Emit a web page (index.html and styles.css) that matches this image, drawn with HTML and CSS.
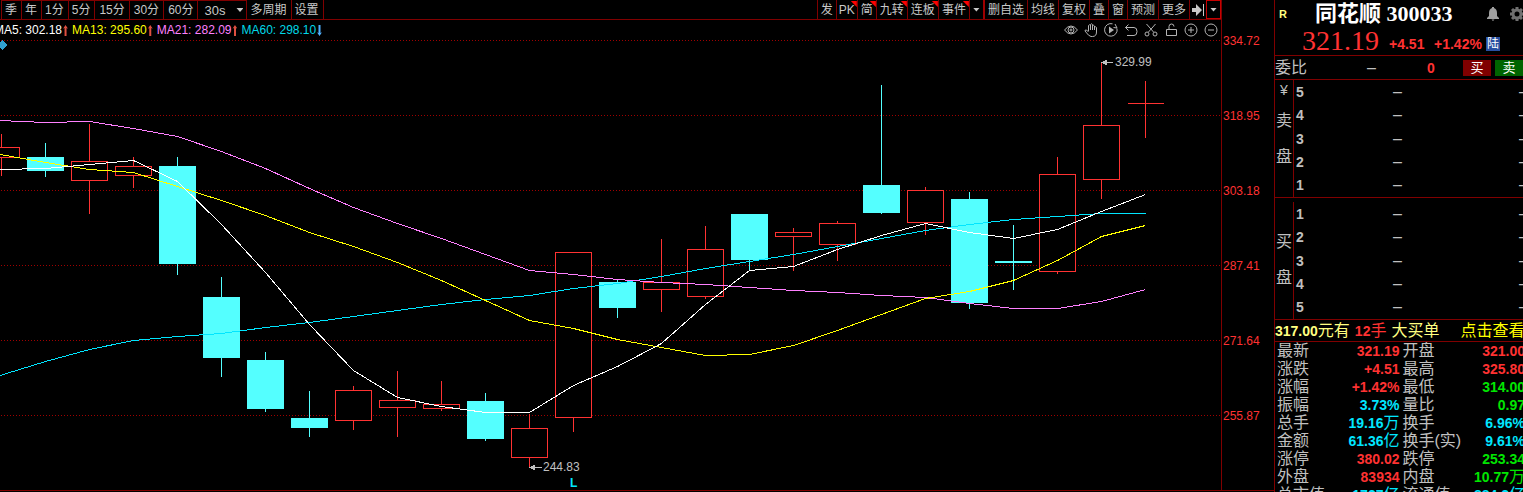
FILE: index.html
```
<!DOCTYPE html>
<html lang="zh-CN">
<head>
    <meta charset="UTF-8">
    <meta name="viewport" content="width=device-width, initial-scale=1.0">
    <title>同花顺 300033</title>
    <link rel="stylesheet" href="styles.css">
</head>
<body>

<div class="app">
    <main class="chart-area">
        <div class="chart-head">
            <div class="toolbar">
                <div class="periods">
                    <button>季</button>
                    <button>年</button>
                    <button>1分</button>
                    <button>5分</button>
                    <button class="wide">15分</button>
                    <button class="wide">30分</button>
                    <button class="wide">60分</button>
                    <span class="drop">
                        <select aria-label="秒周期"><option>30s</option></select>
                    </span>
                    <button class="plain">多周期</button>
                    <button class="plain last">设置</button>
                </div>
                <div class="tools">
                    <button>发</button>
                    <button class="mark pk">PK</button>
                    <button class="mark">简</button>
                    <button class="mark">九转</button>
                    <button class="mark">连板</button>
                    <button class="mark">事件</button>
                    <button class="caret" aria-label="展开"></button>
                    <button class="split">删自选</button>
                    <button>均线</button>
                    <button>复权</button>
                    <button>叠</button>
                    <button>窗</button>
                    <button>预测</button>
                    <button>更多</button>
                    <button class="skip" aria-label="最右">
                        <svg width="12" height="12" viewBox="0 0 12 12"><path d="M0 4h4V0l6 6-6 6V8H0zM11 0h1v12h-1z" fill="#c8c8c8"/></svg>
                    </button>
                    <button class="caret framed" aria-label="菜单"></button>
                </div>
            </div>

            <div class="legend">
                <div class="averages">
                    <span class="ma5">MA5: 302.18<i class="up"></i></span>
                    <span class="ma13">MA13: 295.60<i class="up"></i></span>
                    <span class="ma21">MA21: 282.09<i class="up"></i></span>
                    <span class="ma60">MA60: 298.10<i class="down"></i></span>
                </div>
                <div class="draw-tools">
                    <svg viewBox="0 0 14 14"><path d="M.5 7Q7-1 13.500 7 7 15 .5 7z"/><circle cx="7" cy="7" r="3"/><circle cx="7" cy="7" r="1"/></svg>
                    <svg viewBox="0 0 14 14"><path d="M4.500 8V2.500q1-1.500 2 0V7M6.500 6V1.500q1-1.500 2 0V7M8.500 3q1-1.500 2 0v4M10.500 4.500q1-1.500 2 0V9q0 4.500-4 4.500H7Q5 13.500 1 8q0-1.500 1.500-1l2 2"/></svg>
                    <svg viewBox="0 0 14 14"><path d="M8.500.8A6.300 6.300 0 1 0 13 5.500M11 1l2 4-3.500-.5"/><path class="solid" d="M5 3.500L10 7l-5 3.500z"/></svg>
                    <svg viewBox="0 0 14 14"><path d="M4.500 1.500L1.500 4.500l3 3M1.500 4.500H10q3 0 3 4t-3 4H3"/></svg>
                    <svg viewBox="0 0 14 14"><path d="M2.500 1l7 8M11.500 1l-7 8"/><circle cx="3" cy="11" r="2"/><circle cx="11" cy="11" r="2"/></svg>
                    <svg viewBox="0 0 14 14"><path d="M2.500 6.500h10v6h-10zM5 6.500V3.500q0-2.500 2.500-2.500T10 3.500"/></svg>
                    <svg viewBox="0 0 14 14"><circle cx="7" cy="7" r="6"/><path d="M4 7h6M7 4v6"/></svg>
                    <svg viewBox="0 0 14 14"><circle cx="7" cy="7" r="6"/><path d="M4 7h6"/></svg>
                </div>
            </div>
        </div>

        <svg id="chart" viewBox="0 40 1274 452"></svg>
    </main>

    <aside class="quote">
        <header>
            <div class="name-row">
                <span class="flag">R</span>
                <h1>同花顺 300033</h1>
                <svg class="bell" width="14" height="14" viewBox="0 0 14 14"><path d="M6 0h2v1q3 1 3 5v3l2 2v1H1v-1l2-2V6q0-4 3-5zM5.500 12.500h3L7 14z"/></svg>
                <svg class="gear" width="14" height="14" viewBox="0 0 14 14"><circle cx="7" cy="7" r="4"/><path d="M7 0v2.500M7 11.500V14M0 7h2.500M11.500 7H14M2 2l2 2M10 10l2 2M12 2l-2 2M4 10l-2 2"/></svg>
            </div>
            <div class="price-row">
                <span class="price">321.19</span>
                <span class="change">+4.51</span>
                <span class="percent">+1.42%</span>
                <span class="badge">陆</span>
            </div>
        </header>

        <div class="ratio">
            <span class="ratio-label">委比</span>
            <span class="ratio-value">–</span>
            <b class="red">0</b>
            <div class="trade">
                <button class="buy">买</button>
                <button class="sell">卖</button>
            </div>
        </div>

        <section class="book">
            <div class="side"><small>¥</small><span>卖</span><span>盘</span></div>
            <ol class="levels">
                <li><b>5</b><span>–</span><span>–</span></li>
                <li><b>4</b><span>–</span><span>–</span></li>
                <li><b>3</b><span>–</span><span>–</span></li>
                <li><b>2</b><span>–</span><span>–</span></li>
                <li><b>1</b><span>–</span><span>–</span></li>
            </ol>
        </section>
        <section class="book bids">
            <div class="side"><span>买</span><span>盘</span></div>
            <ol class="levels">
                <li><b>1</b><span>–</span><span>–</span></li>
                <li><b>2</b><span>–</span><span>–</span></li>
                <li><b>3</b><span>–</span><span>–</span></li>
                <li><b>4</b><span>–</span><span>–</span></li>
                <li><b>5</b><span>–</span><span>–</span></li>
            </ol>
        </section>

        <div class="alert">
            <span><b>317.00</b>元有</span>
            <span class="red"><b>12</b>手</span>
            <span>大买单</span>
            <a href="#">点击查看</a>
        </div>

        <table>
            <tbody>
                <tr><th>最新</th><td class="red">321.19</td><th>开盘</th><td class="red">321.00</td></tr>
                <tr><th>涨跌</th><td class="red">+4.51</td><th>最高</th><td class="red">325.80</td></tr>
                <tr><th>涨幅</th><td class="red">+1.42%</td><th>最低</th><td class="green">314.00</td></tr>
                <tr><th>振幅</th><td class="cyan">3.73%</td><th>量比</th><td class="green">0.97</td></tr>
                <tr><th>总手</th><td class="cyan">19.16<span>万</span></td><th>换手</th><td class="cyan">6.96%</td></tr>
                <tr><th>金额</th><td class="cyan">61.36<span>亿</span></td><th>换手(实)</th><td class="cyan">9.61%</td></tr>
                <tr><th>涨停</th><td class="red">380.02</td><th>跌停</th><td class="green">253.34</td></tr>
                <tr><th>外盘</th><td class="red">83934</td><th>内盘</th><td class="green">10.77<span>万</span></td></tr>
                <tr><th>总市值</th><td class="cyan">1727<span>亿</span></td><th>流通值</th><td class="cyan">884.2<span>亿</span></td></tr>
            </tbody>
        </table>
    </aside>
</div>

<script src="chart.js"></script>
</body>
</html>
```
FILE: styles.css
```
* {
    box-sizing: border-box;
}

body {
    margin: 0;
    background-color: #000;
    color: #c0c0c0;
    font-family: "Liberation Sans", "Noto Sans CJK SC", sans-serif;
    font-size: 12px;
}

button, select {
    margin: 0;
    border: 0;
    border-radius: 0;
    background: none;
    color: #c8c8c8;
    font: inherit;
    cursor: pointer;
}

.app {
    display: flex;
    height: 100vh;
    overflow: hidden;
}

.chart-area {
    flex: 1;
    min-width: 0;
    display: flex;
    flex-direction: column;
}

.chart-head {
    margin-right: 52px;
    border-right: 1px solid #800000;
}

/* toolbar */
.toolbar {
    display: flex;
    justify-content: space-between;
    height: 20px;
    border-bottom: 1px solid #800000;
}

.periods, .tools {
    display: flex;
}

.periods {
    padding-left: 1px;
}

.toolbar button {
    position: relative;
    height: 19px;
    padding: 0 3px;
    border-left: 1px solid #800000;
    line-height: 18px;
    white-space: nowrap;
}

.periods button {
    padding: 0 4px 0 3px;
    border-top: 1px solid #800000;
}

.periods .wide {
    padding: 0 4px;
}

.periods .plain {
    border-top: 0;
}

.periods .last {
    border-right: 1px solid #800000;
}

.drop {
    position: relative;
    border-left: 1px solid #800000;
    border-top: 1px solid #800000;
}

.drop select {
    appearance: none;
    width: 48px;
    height: 18px;
    padding: 0 0 0 6px;
    font-size: 13px;
}

.drop::after, .caret::after {
    content: "";
    width: 7px;
    height: 4px;
    background-color: #c8c8c8;
    clip-path: polygon(0 0, 100% 0, 50% 100%);
}

.drop::after {
    position: absolute;
    right: 3px;
    top: 7px;
    pointer-events: none;
}

.mark::before {
    content: "";
    position: absolute;
    top: 1px;
    right: 0;
    width: 6px;
    height: 6px;
    background-color: #f00;
    clip-path: polygon(0 0, 100% 0, 100% 100%);
}

.toolbar .pk {
    padding: 0 2px;
}

.toolbar .caret {
    display: flex;
    align-items: center;
    padding: 0 3px;
}

.toolbar .split {
    border-left: 2px solid #a00000;
}

.toolbar .skip {
    padding: 3px 2px;
    line-height: 0;
}

.toolbar .framed {
    border: 1px solid #c80000;
}

/* moving average legend */
.legend {
    display: flex;
    justify-content: space-between;
    align-items: center;
    height: 20px;
    padding-right: 3px;
}

.averages {
    display: flex;
    gap: 4px;
    margin-left: -6px;
    white-space: nowrap;
}

.averages i {
    display: inline-block;
    width: 5px;
    height: 11px;
    margin-left: 1px;
    vertical-align: -2px;
    background-color: #e05040;
    clip-path: polygon(50% 0, 100% 35%, 70% 28%, 70% 100%, 30% 100%, 30% 28%, 0 35%);
}

.averages .down {
    background-color: #50b0ff;
    transform: rotate(180deg);
}

.ma5 { color: #fff; }
.ma13 { color: #ff0; }
.ma21 { color: #ff80ff; }
.ma60 { color: #00d8e8; }

.draw-tools {
    display: flex;
    gap: 6px;
}

.draw-tools svg {
    width: 14px;
    height: 14px;
    fill: none;
    stroke: #b4b4b4;
}

.draw-tools .solid {
    fill: #b4b4b4;
    stroke: none;
}

/* chart */
#chart {
    display: block;
    width: 100%;
    overflow: visible;
    shape-rendering: crispEdges;
}

#chart .grid {
    stroke: #a00000;
    stroke-dasharray: 1 2;
}

#chart .frame {
    stroke: #800000;
}

#chart .axis {
    fill: #ff3232;
}

#chart .rise {
    fill: #000;
    stroke: #ff3232;
}

#chart .fall {
    fill: #54ffff;
    stroke: #54ffff;
}

#chart polyline {
    fill: none;
}

#chart .line5 { stroke: #fff; }
#chart .line13 { stroke: #ff0; }
#chart .line21 { stroke: #ff80ff; }
#chart .line60 { stroke: #00e6ff; }

#chart .note {
    fill: #c0c0c0;
    stroke: none;
}

#chart .pointer {
    stroke: #c0c0c0;
    fill: #c0c0c0;
}

#chart .flag-l {
    fill: #00e6ff;
    font-weight: bold;
}

#chart .diamond {
    fill: #30a0d0;
}

/* quote panel */
.quote {
    width: 249px;
    flex: none;
    border-left: 1px solid #800000;
    overflow: hidden;
}

.quote b {
    font-size: 14px;
}

.red { color: #ff3232; }
.green { color: #00e600; }
.cyan { color: #00e6ff; }

.quote header {
    height: 56px;
    border-bottom: 1px solid #800000;
}

.name-row {
    display: flex;
    align-items: center;
    height: 27px;
    margin-right: -1px;
}

.flag {
    width: 40px;
    padding-left: 4px;
    color: #ffff80;
    font-size: 11px;
    font-weight: bold;
}

h1 {
    margin: 0;
    color: #fff;
    font: bold 22px/26px "Liberation Serif", "Noto Sans CJK SC", serif;
    white-space: nowrap;
}

.bell {
    margin-left: auto;
    fill: #a0a0a0;
}

.gear {
    margin-left: 10px;
    fill: none;
    stroke: #707070;
    stroke-width: 3;
}

.price-row {
    display: flex;
    align-items: center;
    height: 28px;
    padding-left: 27px;
    color: #ff3232;
    font-size: 14px;
    font-weight: bold;
}

.price {
    width: 87px;
    font: 28px/28px "Liberation Serif", serif;
}

.change {
    width: 45px;
    padding-top: 6px;
}

.percent {
    width: 52px;
    padding-top: 6px;
}

.badge {
    width: 14px;
    margin-top: 6px;
    background-color: #2850a0;
    color: #fff;
    font-size: 12px;
    font-weight: normal;
    line-height: 14px;
    text-align: center;
}

.ratio {
    display: flex;
    align-items: center;
    height: 24px;
    border-bottom: 1px solid #800000;
    line-height: 22px;
}

.ratio-label {
    width: 92px;
    font-size: 16px;
}

.ratio-value {
    width: 60px;
    font-size: 16px;
}

.trade {
    display: flex;
    gap: 4px;
    margin-left: auto;
}

.trade button {
    width: 28px;
    height: 16px;
    padding: 0;
    color: #fff;
    font-size: 13px;
    line-height: 16px;
}

.trade .buy { background-color: #800000; }
.trade .sell { background-color: #006400; }

.book {
    display: flex;
    height: 118px;
    border-bottom: 1px solid #800000;
}

.bids {
    height: 122px;
    padding-top: 4px;
}

.side {
    flex: none;
    display: flex;
    flex-direction: column;
    width: 19px;
    border-right: 1px solid #800000;
    font-size: 16px;
    line-height: 36px;
    text-align: center;
}

.side small {
    height: 23px;
    font-size: 14px;
    line-height: 20px;
}

.bids .side {
    padding-top: 22px;
}

.levels {
    flex: 1;
    min-width: 0;
    display: flex;
    flex-direction: column;
    margin: 0;
    padding: 0;
    list-style: none;
}

.levels li {
    flex: 1;
    display: grid;
    grid-template-columns: 97px 126px 10px;
    align-items: center;
    padding-left: 2px;
    font-size: 16px;
    line-height: 22px;
}

.alert {
    display: flex;
    height: 22px;
    border-bottom: 1px solid #800000;
    color: #ffff80;
    font-size: 16px;
    line-height: 22px;
    white-space: nowrap;
    gap: 5px;
}

.alert a {
    margin-left: 16px;
    color: #ff0;
    text-decoration: none;
}

table {
    width: calc(100% + 3px);
    table-layout: fixed;
    border-collapse: collapse;
}

tr {
    height: 18px;
}

th, td {
    padding: 0 1px;
    line-height: 18px;
    white-space: nowrap;
}

th {
    padding-left: 2px;
    font-size: 16px;
    font-weight: normal;
    text-align: left;
}

td {
    font-size: 14px;
    font-weight: bold;
    text-align: right;
}

td span {
    font-size: 16px;
    font-weight: normal;
    line-height: 16px;
}
```
FILE: chart.js
```
const chart = document.getElementById('chart');
const STEP = 44;
const HALF = 18;

// high, body top, body bottom, low, rising
const candles = [
    [134, 147, 157, 175, 1],
    [143, 157, 170, 176, 0],
    [124, 161, 180, 213, 1],
    [157, 166, 175, 187, 1],
    [157, 166, 263, 274, 0],
    [277, 297, 357, 376, 0],
    [352, 360, 408, 411, 0],
    [391, 418, 427, 436, 0],
    [386, 390, 420, 429, 1],
    [371, 400, 407, 436, 1],
    [381, 404, 408, 410, 1],
    [393, 401, 438, 440, 0],
    [414, 428, 457, 467, 1],
    [252, 252, 417, 431, 1],
    [280, 282, 307, 317, 0],
    [239, 282, 289, 311, 1],
    [226, 249, 296, 298, 1],
    [214, 214, 259, 270, 0],
    [228, 232, 236, 270, 1],
    [221, 223, 244, 260, 1],
    [85, 185, 212, 213, 0],
    [187, 190, 222, 234, 1],
    [192, 199, 302, 308, 0],
    [225, 261, 262, 289, 0],
    [157, 174, 271, 273, 1],
    [62, 125, 179, 198, 1],
    [81, 103, 103, 137, 1]
];

const averages = {
    line60: [375, 361, 349, 340, 336, 333, 327, 322, 316, 310, 304, 299, 295, 288, 283, 276, 268, 261, 254, 246, 238, 230, 224, 219, 216, 213, 213],
    line21: [120, 122, 121, 128, 136, 151, 168, 188, 207, 223, 238, 254, 270, 274, 279, 282, 284, 287, 290, 292, 295, 297, 303, 308, 308, 301, 289],
    line13: [154, 162, 169, 172, 186, 200, 215, 232, 246, 262, 280, 300, 320, 328, 339, 347, 355, 354, 345, 330, 314, 298, 291, 280, 260, 236, 225],
    line5: [169, 168, 164, 160, 181, 224, 272, 324, 370, 397, 406, 412, 412, 385, 366, 343, 304, 270, 266, 249, 235, 223, 232, 238, 229, 211, 194]
};

const prices = ['334.72', '318.95', '303.18', '287.41', '271.64', '255.87'];

let html = '';

prices.forEach((price, i) => {
    const y = 40 + i * 75;
    html += `<line class="grid" x1="1" y1="${y + 0.5}" x2="1221" y2="${y + 0.5}"/>`;
    html += `<text class="axis" x="1223" y="${y + 5}">${price}</text>`;
});

html += '<path class="frame" d="M1221.5 40V490M0 490.5H1274"/>';
html += '<path class="diamond" d="M2 40l5 5-5 5-5-5z"/>';

candles.forEach(([high, top, bottom, low, rising], i) => {
    const x = 1 + i * STEP + 0.5;
    const cls = rising ? 'rise' : 'fall';
    html += `<path class="${cls}" d="M${x} ${high}V${top}M${x} ${bottom + 1}V${low + 1}"/>`;
    if (top === bottom) {
        html += `<path class="${cls}" d="M${x - HALF} ${top + 0.5}h${HALF * 2}M${x} ${top}V${low}"/>`;
    } else {
        html += `<rect class="${cls}" x="${x - HALF}" y="${top + 0.5}" width="${HALF * 2}" height="${bottom - top}"/>`;
    }
});

Object.entries(averages).forEach(([name, values]) => {
    const points = values.map((y, i) => `${i ? 1.5 + i * STEP : 0},${y + 0.5}`).join(' ');
    html += `<polyline class="${name}" points="${points}"/>`;
});

// highest and lowest price
html += '<path class="pointer" d="M1102 62.5h11M1102 62.5l4-2v4z"/><text class="note" x="1115" y="66">329.99</text>';
html += '<path class="pointer" d="M530 467.5h12M530 467.5l4-2v4z"/><text class="note" x="543" y="471">244.83</text>';
html += '<text class="flag-l" x="570" y="487">L</text>';

chart.innerHTML = html;
```
